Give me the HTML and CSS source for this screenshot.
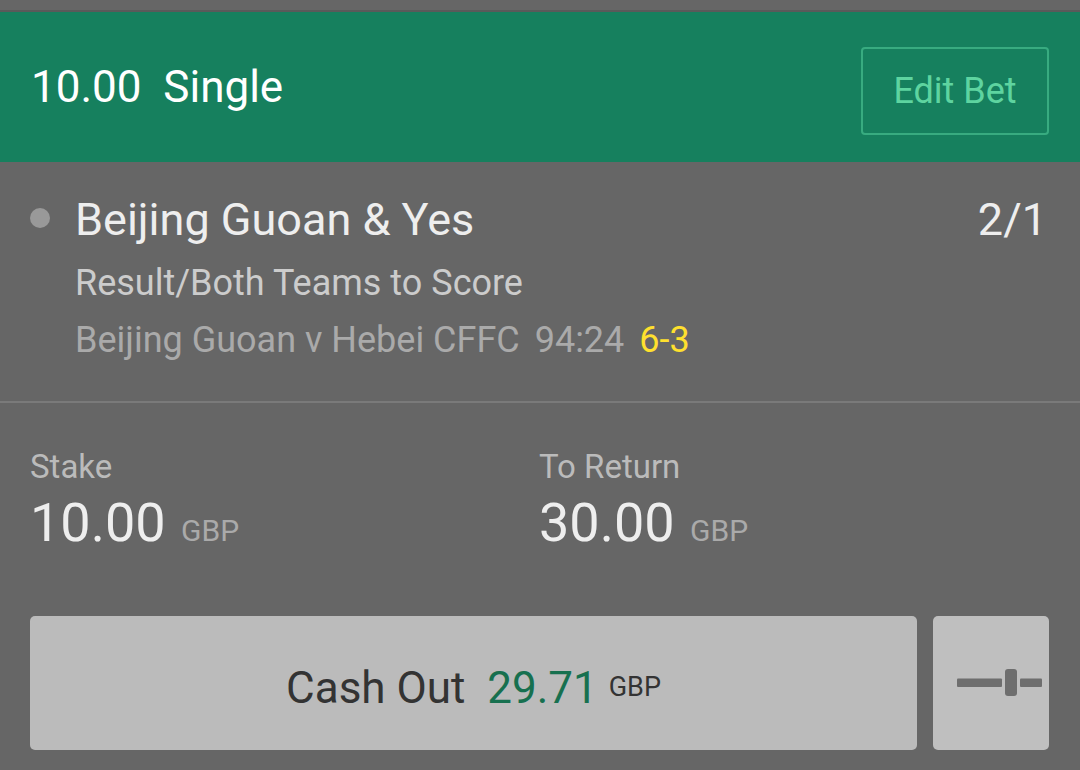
FILE: index.html
```html
<!DOCTYPE html>
<html lang="en">
<head>
    <meta charset="UTF-8">
    <meta name="viewport" content="width=device-width, initial-scale=1.0">
    <title>My Bets</title>
    <link rel="stylesheet" href="styles.css">
</head>
<body>
    <div class="top-strip"></div>
    <header class="bet-header">
        <h1 class="bet-title">10.00&nbsp; Single</h1>
        <button class="edit-btn">Edit Bet</button>
    </header>
    <section class="selection">
        <span class="dot"></span>
        <div class="selection-info">
            <div class="selection-row">
                <span class="selection-name">Beijing Guoan &amp; Yes</span>
                <span class="odds">2/1</span>
            </div>
            <div class="market">Result/Both Teams to Score</div>
            <div class="event">Beijing Guoan v Hebei CFFC <span class="clock">94:24</span> <span class="score">6-3</span></div>
        </div>
    </section>
    <section class="totals">
        <div class="total">
            <div class="total-label">Stake</div>
            <div class="total-value">10.00 <span class="currency">GBP</span></div>
        </div>
        <div class="total">
            <div class="total-label">To Return</div>
            <div class="total-value">30.00 <span class="currency">GBP</span></div>
        </div>
    </section>
    <div class="actions">
        <button class="cashout-btn">Cash Out&nbsp; <span class="cashout-amount">29.71</span> <span class="cashout-currency">GBP</span></button>
        <button class="slider-btn">
            <svg width="86" height="28" viewBox="0 0 86 28">
                <rect x="0" y="9.5" width="45" height="8.5" rx="1" fill="#6e6e6e"/>
                <rect x="48" y="0" width="12" height="27" rx="3" fill="#6e6e6e"/>
                <rect x="63" y="9.5" width="22" height="8.5" rx="1" fill="#6e6e6e"/>
            </svg>
        </button>
    </div>
</body>
</html>
```

FILE: styles.css
```css
body {
    font-family: Roboto, 'Noto Sans', sans-serif;
    background-color: #666666;
    color: #eeeeee;
    margin: 0;
    padding: 0;
}
.top-strip {
    height: 10px;
    background-color: #666666;
    border-bottom: 2px solid #5a5a5a;
}
.bet-header {
    display: flex;
    justify-content: space-between;
    align-items: center;
    height: 150px;
    padding: 0 31px 0 31px;
    background-color: #16805e;
    box-sizing: border-box;
}
.bet-title {
    margin: 0;
    font-size: 44px;
    font-weight: 400;
    color: #ffffff;
}
.edit-btn {
    width: 188px;
    height: 88px;
    margin-top: 7px;
    background: transparent;
    border: 2px solid #38ab80;
    border-radius: 4px;
    color: #5ed4a0;
    font-family: inherit;
    font-size: 36px;
    cursor: pointer;
}
.selection {
    display: flex;
    padding: 32px 33px 0 30px;
    height: 241px;
    box-sizing: border-box;
    border-bottom: 2px solid #7a7a7a;
}
.dot {
    width: 20px;
    height: 20px;
    border-radius: 50%;
    background-color: #999999;
    margin: 14px 25px 0 0;
    flex-shrink: 0;
}
.selection-info {
    flex: 1;
}
.selection-row {
    display: flex;
    justify-content: space-between;
    font-size: 45px;
    line-height: 52px;
    color: #eeeeee;
}
.market {
    margin-top: 15px;
    font-size: 36px;
    line-height: 44px;
    color: #cccccc;
}
.event {
    margin-top: 13px;
    font-size: 36px;
    line-height: 44px;
    color: #aaaaaa;
}
.clock {
    margin-left: 6px;
}
.score {
    margin-left: 6px;
    color: #ffe02e;
}
.totals {
    display: grid;
    grid-template-columns: 509px 1fr;
    padding: 44px 30px 0;
    height: 213px;
    box-sizing: border-box;
}
.total-label {
    font-size: 33px;
    line-height: 40px;
    color: #bbbbbb;
}
.total-value {
    margin-top: 5px;
    font-size: 54px;
    line-height: 62px;
    color: #eeeeee;
}
.currency {
    font-size: 30px;
    color: #aaaaaa;
    margin-left: 2px;
}
.actions {
    display: flex;
    gap: 16px;
    padding: 0 31px 0 30px;
}
.cashout-btn {
    flex: 1;
    height: 134px;
    padding: 10px 0 0;
    background-color: #bbbbbb;
    border: none;
    border-radius: 5px;
    font-family: inherit;
    font-size: 44px;
    color: #333333;
    cursor: pointer;
}
.cashout-amount {
    color: #17704f;
}
.cashout-currency {
    font-size: 27px;
    vertical-align: 7px;
}
.slider-btn {
    width: 116px;
    height: 134px;
    background-color: #bfbfbf;
    border: none;
    border-radius: 5px;
    display: flex;
    align-items: center;
    justify-content: flex-start;
    padding: 0 0 0 24px;
    cursor: pointer;
}
```
